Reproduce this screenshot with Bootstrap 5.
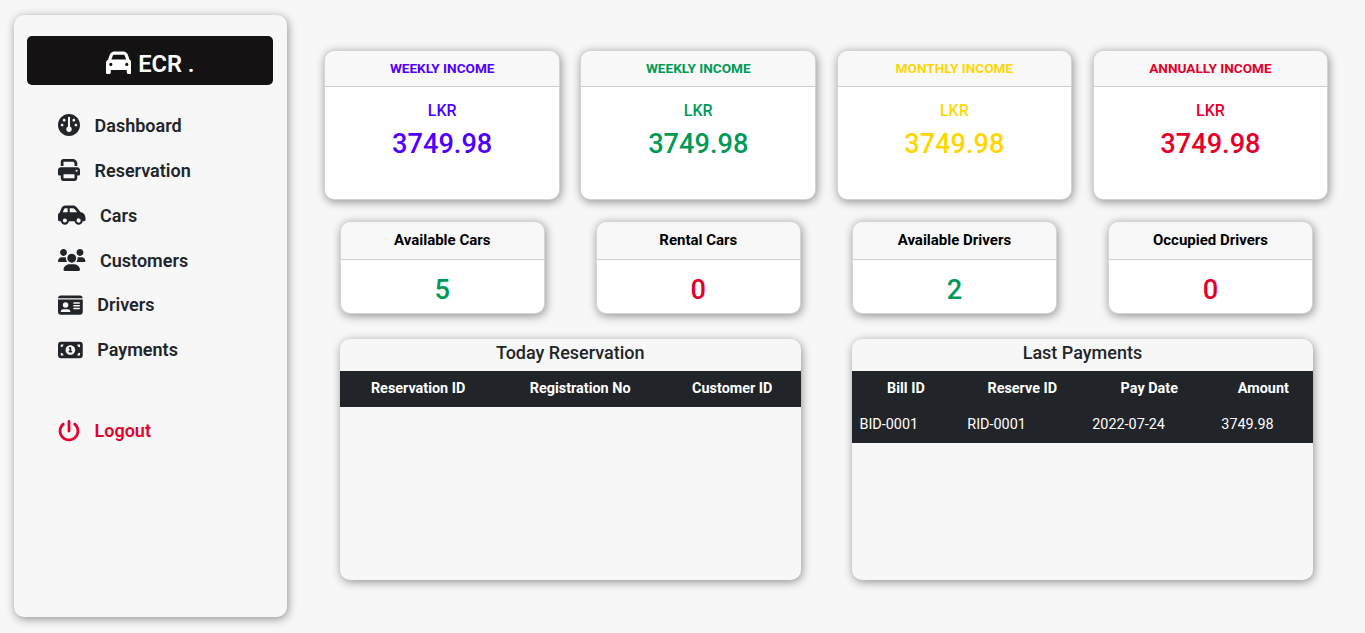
<!DOCTYPE html>
<html lang="en">
<head>
<meta charset="utf-8">
<meta name="viewport" content="width=device-width, initial-scale=1">
<title>ECR Dashboard</title>
<link href="https://cdn.jsdelivr.net/npm/bootstrap@5.3.0/dist/css/bootstrap.min.css" rel="stylesheet">
<style>
  :root { --soft: 1px 2px 10px rgba(0,0,0,.42); }
  body { font-family: Roboto, "Liberation Sans", sans-serif; background: #f7f7f7; height: 633px; overflow: hidden; }
  .side-panel { width: 20%; height: 602px; margin: 15px 1% 0; padding: 21px 13.5px 0; border-radius: 10px; background: #f7f7f7; box-shadow: var(--soft); }
  .brand { height: 49px; background: #141213; border-radius: 5px; font-size: 23.6px; font-weight: 600; line-height: 36px; padding-top: 6px; }
  .brand svg { height: 25.6px; margin-bottom: 2px; }
  .brand span { margin-left: 7px; }
  .menu { margin-top: 18.4px; padding-left: 31px; }
  .menu a { display: flex; align-items: center; height: 44.8px; gap: 14.4px; color: #212529; font-size: 18px; font-weight: 600; text-decoration: none; }
  .menu svg { height: 22px; flex: none; }
  .menu a:nth-child(-n+2) svg { margin-bottom: 1px; }
  .menu .logout { margin-top: 36px; color: #e4002b; }
  svg { fill: currentColor; fill-rule: evenodd; display: block; }
  .board { width: 1024.4px; margin-left: calc(1% + .23px); padding-top: 50px; }
  .card { border-radius: 10px; box-shadow: var(--soft); text-align: center; --bs-card-inner-border-radius: 9px; --bs-card-border-color: rgba(0,0,0,.17); }
  .income { width: 23%; height: 150px; margin: 0 1%; }
  .income .card-header { height: 36px; padding: 7px 0 9px; font-size: 13.6px; line-height: 20px; font-weight: 700; }
  .income .card-body { padding: 14px 0 0; }
  .unit { font-size: 16px; line-height: 19px; font-weight: 500; }
  .figure-lg { font-size: 27.2px; line-height: 34px; font-weight: 500; }
  .income .figure-lg { margin-top: 7px; }
  .stat { width: 20%; height: 93px; margin: 21px 2.5% 0; }
  .stat .card-header { height: 38px; padding: 8px 0; font-size: 15px; line-height: 20px; font-weight: 700; color: #000; }
  .stat .card-body { padding: 13px 0 0; }
  .violet { color: #4f00ff; } .green { color: #009a56; } .yellow { color: #ffd700; } .red { color: #e4002b; }
  .list-panel { width: 45%; height: 241px; margin: 25px 2.5% 0; border-radius: 10px; box-shadow: var(--soft); overflow: hidden; }
  .list-panel h2 { font-size: 18px; line-height: 28px; height: 32px; margin: 0; font-weight: 500; text-align: center; }
  .list-panel table { table-layout: fixed; font-size: 14.4px; line-height: 20px; margin: 0; }
  .list-panel .table th, .list-panel .table td { height: 36px; padding: 8px 7.5px; border: 0; background: #212529; color: #fff; white-space: nowrap; }
  .list-panel th { text-align: center; font-weight: 700; }
</style>
</head>
<body>
<div class="d-flex align-items-start">
  <aside class="side-panel flex-shrink-0">
    <div class="brand d-flex justify-content-center text-white">
      <div class="d-flex align-items-center"><svg viewBox="0 0 512 512"><path d="M135.2 117.4L109.1 192H402.9l-26.1-74.6C372.3 104.6 360.2 96 346.6 96H165.4c-13.6 0-25.7 8.6-30.2 21.4zM39.6 196.8L74.8 96.3C88.3 57.8 124.6 32 165.4 32H346.6c40.8 0 77.1 25.8 90.6 64.3l35.2 100.5c23.2 9.6 39.6 32.5 39.6 59.2V400v48c0 17.7-14.3 32-32 32H448c-17.7 0-32-14.3-32-32V400H96v48c0 17.7-14.3 32-32 32H32c-17.7 0-32-14.3-32-32V400 256c0-26.7 16.4-49.6 39.6-59.2zM128 288a32 32 0 1 0 -64 0 32 32 0 1 0 64 0zm288 32a32 32 0 1 0 0-64 32 32 0 1 0 0 64z"/></svg><span>ECR .</span></div>
    </div>
    <nav class="menu">
      <a href="#"><svg viewBox="0 0 512 512"><path d="M512 256C512 397.4 397.4 512 256 512C114.6 512 0 397.4 0 256C0 114.6 114.6 0 256 0C397.4 0 512 114.6 512 256zM280 292.7V88C280 74.75 269.3 64 256 64C242.7 64 232 74.75 232 88V292.7C208.5 302.1 192 325.1 192 352C192 387.3 220.7 416 256 416C291.3 416 320 387.3 320 352C320 325.1 303.5 302.1 280 292.7zM144 176C161.7 176 176 161.7 176 144C176 126.3 161.7 112 144 112C126.3 112 112 126.3 112 144C112 161.7 126.3 176 144 176zM96 224C78.33 224 64 238.3 64 256C64 273.7 78.33 288 96 288C113.7 288 128 273.7 128 256C128 238.3 113.7 224 96 224zM416 288C433.7 288 448 273.7 448 256C448 238.3 433.7 224 416 224C398.3 224 384 238.3 384 256C384 273.7 398.3 288 416 288zM368 112C350.3 112 336 126.3 336 144C336 161.7 350.3 176 368 176C385.7 176 400 161.7 400 144C400 126.3 385.7 112 368 112z"/></svg><span>Dashboard</span></a>
      <a href="#"><svg viewBox="0 0 512 512"><path d="M128 0C92.7 0 64 28.7 64 64v96h64V64H354.7L384 93.3V160h64V93.3c0-17-6.7-33.3-18.7-45.3L400 18.7C388 6.7 371.7 0 354.7 0H128zM384 352v96H128V352H384zm64 32h32c17.7 0 32-14.3 32-32V256c0-35.3-28.7-64-64-64H64c-35.3 0-64 28.7-64 64v96c0 17.7 14.3 32 32 32H64v64c0 35.3 28.7 64 64 64H384c35.3 0 64-28.7 64-64V384zM432 248a24 24 0 1 1 0 48 24 24 0 1 1 0-48z"/></svg><span>Reservation</span></a>
      <a href="#"><svg viewBox="0 0 640 512"><path d="M171.3 96H224v96H111.3l30.4-75.9C146.5 104 158.2 96 171.3 96zM272 192V96h81.2c9.7 0 18.9 4.4 25 12l67 84H272zm256.2 1L428.2 68c-18.2-22.8-45.8-36-75-36H171.3c-39.3 0-74.6 23.9-89.1 60.3L40.6 196.4C16.8 205.8 0 228.9 0 256V368c0 17.7 14.3 32 32 32H65.3c7.6 45.4 47.1 80 94.7 80s87.1-34.6 94.7-80H385.3c7.6 45.4 47.1 80 94.7 80s87.1-34.6 94.7-80H608c17.7 0 32-14.3 32-32V320c0-65.2-48.8-119-111.8-127zM434.7 368a48 48 0 1 1 90.5 32 48 48 0 1 1 -90.5-32zM160 336a48 48 0 1 1 0 96 48 48 0 1 1 0-96z"/></svg><span>Cars</span></a>
      <a href="#"><svg viewBox="0 0 640 512"><path d="M319.9 320c57.41 0 103.1-46.56 103.1-104c0-57.44-46.54-104-103.1-104c-57.41 0-103.1 46.56-103.1 104C215.9 273.4 262.5 320 319.9 320zM369.9 352H270.1C191.6 352 128 411.7 128 485.3C128 500.1 140.7 512 156.4 512h327.2C499.3 512 512 500.1 512 485.3C512 411.7 448.4 352 369.9 352zM512 160c44.18 0 80-35.82 80-80S556.2 0 512 0c-44.18 0-80 35.82-80 80S467.8 160 512 160zM183.9 216c0-5.449 .9824-10.63 1.609-15.91C174.6 194.1 162.6 192 149.9 192H88.08C39.44 192 0 233.8 0 285.3C0 295.6 7.887 304 17.62 304h199.5C196.7 280.2 183.9 249.7 183.9 216zM128 160c44.18 0 80-35.82 80-80S172.2 0 128 0C83.82 0 48 35.82 48 80S83.82 160 128 160zM551.9 192h-61.84c-12.8 0-24.88 3.037-35.86 8.24C454.8 205.5 455.8 210.6 455.8 216c0 33.71-12.78 64.21-33.16 88h199.7C632.1 304 640 295.6 640 285.3C640 233.8 600.6 192 551.9 192z"/></svg><span>Customers</span></a>
      <a href="#"><svg viewBox="0 0 576 512"><path d="M0 96H576c0-35.3-28.7-64-64-64H64C28.7 32 0 60.7 0 96zm0 32V416c0 35.3 28.7 64 64 64H512c35.3 0 64-28.7 64-64V128H0zM64 405.3c0-29.5 23.9-53.3 53.3-53.3H234.7c29.5 0 53.3 23.9 53.3 53.3c0 5.9-4.8 10.7-10.7 10.7H74.7c-5.9 0-10.7-4.8-10.7-10.7zM176 192a64 64 0 1 1 0 128 64 64 0 1 1 0-128zm176 16c0-8.8 7.2-16 16-16H496c8.8 0 16 7.2 16 16s-7.2 16-16 16H368c-8.8 0-16-7.2-16-16zm0 64c0-8.8 7.2-16 16-16H496c8.8 0 16 7.2 16 16s-7.2 16-16 16H368c-8.8 0-16-7.2-16-16zm0 64c0-8.8 7.2-16 16-16H496c8.8 0 16 7.2 16 16s-7.2 16-16 16H368c-8.8 0-16-7.2-16-16z"/></svg><span>Drivers</span></a>
      <a href="#"><svg viewBox="0 0 576 512"><path d="M252 208C252 196.1 260.1 188 272 188H288C299 188 308 196.1 308 208V276H312C323 276 332 284.1 332 296C332 307 323 316 312 316H264C252.1 316 244 307 244 296C244 284.1 252.1 276 264 276H268V227.6C258.9 225.7 252 217.7 252 208zM512 64C547.3 64 576 92.65 576 128V384C576 419.3 547.3 448 512 448H64C28.65 448 0 419.3 0 384V128C0 92.65 28.65 64 64 64H512zM128 384C128 348.7 99.35 320 64 320V384H128zM64 192C99.35 192 128 163.3 128 128H64V192zM512 384V320C476.7 320 448 348.7 448 384H512zM512 128H448C448 163.3 476.7 192 512 192V128zM288 144C226.1 144 176 194.1 176 256C176 317.9 226.1 368 288 368C349.9 368 400 317.9 400 256C400 194.1 349.9 144 288 144z"/></svg><span>Payments</span></a>
      <a href="#" class="logout"><svg viewBox="0 0 512 512"><path d="M288 32c0-17.7-14.3-32-32-32s-32 14.3-32 32V256c0 17.7 14.3 32 32 32s32-14.3 32-32V32zM143.5 120.6c13.6-11.3 15.4-31.5 4.1-45.1s-31.5-15.4-45.1-4.1C49.7 115.4 16 181.8 16 256c0 132.5 107.5 240 240 240s240-107.5 240-240c0-74.2-33.8-140.6-86.6-184.6c-13.6-11.3-33.8-9.4-45.1 4.1s-9.4 33.8 4.1 45.1c38.9 32.3 63.5 81 63.5 135.4c0 97.2-78.8 176-176 176s-176-78.8-176-176c0-54.4 24.7-103.1 63.5-135.4z"/></svg><span>Logout</span></a>
    </nav>
  </aside>
  <main class="board flex-shrink-0">
    <div class="d-flex">
      <div class="card income"><div class="card-header violet">WEEKLY INCOME</div><div class="card-body violet"><div class="unit">LKR</div><div class="figure-lg">3749.98</div></div></div>
      <div class="card income"><div class="card-header green">WEEKLY INCOME</div><div class="card-body green"><div class="unit">LKR</div><div class="figure-lg">3749.98</div></div></div>
      <div class="card income"><div class="card-header yellow">MONTHLY INCOME</div><div class="card-body yellow"><div class="unit">LKR</div><div class="figure-lg">3749.98</div></div></div>
      <div class="card income"><div class="card-header red">ANNUALLY INCOME</div><div class="card-body red"><div class="unit">LKR</div><div class="figure-lg">3749.98</div></div></div>
    </div>
    <div class="d-flex">
      <div class="card stat"><div class="card-header">Available Cars</div><div class="card-body"><div class="figure-lg green">5</div></div></div>
      <div class="card stat"><div class="card-header">Rental Cars</div><div class="card-body"><div class="figure-lg red">0</div></div></div>
      <div class="card stat"><div class="card-header">Available Drivers</div><div class="card-body"><div class="figure-lg green">2</div></div></div>
      <div class="card stat"><div class="card-header">Occupied Drivers</div><div class="card-body"><div class="figure-lg red">0</div></div></div>
    </div>
    <div class="d-flex">
      <section class="list-panel">
        <h2>Today Reservation</h2>
        <table class="table table-dark">
          <colgroup><col style="width:34%"><col style="width:36.3%"><col style="width:29.7%"></colgroup>
          <thead><tr><th>Reservation ID</th><th>Registration No</th><th>Customer ID</th></tr></thead>
        </table>
      </section>
      <section class="list-panel">
        <h2>Last Payments</h2>
        <table class="table table-dark">
          <colgroup><col style="width:23.4%"><col style="width:27.1%"><col style="width:28%"><col style="width:21.5%"></colgroup>
          <thead><tr><th>Bill ID</th><th>Reserve ID</th><th>Pay Date</th><th>Amount</th></tr></thead>
          <tbody><tr><td>BID-0001</td><td>RID-0001</td><td>2022-07-24</td><td>3749.98</td></tr></tbody>
        </table>
      </section>
    </div>
  </main>
</div>
<script src="https://cdn.jsdelivr.net/npm/bootstrap@5.3.0/dist/js/bootstrap.bundle.min.js"></script>
</body>
</html>
